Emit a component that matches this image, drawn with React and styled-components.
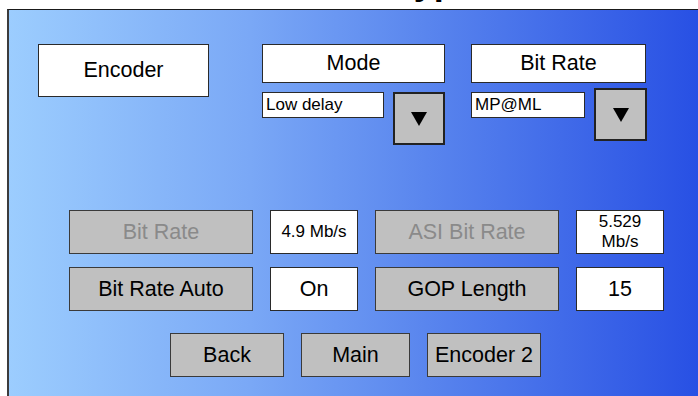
import styled, { createGlobalStyle } from 'styled-components';

const Global = createGlobalStyle`
  html, body {
    margin: 0;
    padding: 0;
    background: #ffffff;
    overflow: hidden;
  }
  * { box-sizing: border-box; }
  body {
    font-family: "Liberation Sans", Arial, sans-serif;
    color: #000;
  }
`;

const Page = styled.div`
  width: 698px;
  height: 396px;
  overflow: hidden;
  display: flex;
  flex-direction: column;
`;

const TitleStrip = styled.div`
  height: 9px;
  overflow: hidden;
  display: flex;
  justify-content: center;
  align-items: flex-end;
  padding-left: 18px;
`;

const Title = styled.h1`
  margin: 0 0 9px 0;
  font-size: 36px;
  line-height: 36px;
  font-weight: bold;
  white-space: nowrap;
`;

const Panel = styled.div`
  margin-left: 7px;
  flex: 1;
  border-top: 1px solid #1a1a1a;
  border-left: 2px solid #3c3c3c;
  background: linear-gradient(90deg, #9ccdfe 0%, #7aa8f6 35%, #5a86ee 60%, #2850e4 100%);
  padding-top: 34px;
  display: flex;
  flex-direction: column;
`;

const TopRow = styled.div`
  display: flex;
  align-items: flex-start;
  padding-left: 29px;
`;

const Label = styled.div`
  width: ${(p) => p.w}px;
  height: ${(p) => p.h}px;
  background: #ffffff;
  border: 1px solid #2a2a2a;
  display: flex;
  align-items: center;
  justify-content: center;
  font-size: 21.5px;
  text-align: center;
`;

const Group = styled.div`
  display: flex;
  flex-direction: column;
  gap: 9px;
  margin-left: ${(p) => p.gap}px;
`;

const PickRow = styled.div`
  display: flex;
  align-items: flex-start;
  gap: 9px;
`;

const Field = styled.div`
  width: ${(p) => p.w}px;
  height: 26px;
  background: #ffffff;
  border: 1px solid #2a2a2a;
  display: flex;
  align-items: center;
  padding-left: 3px;
  font-size: 17px;
`;

const DropButton = styled.button`
  width: ${(p) => p.w}px;
  height: 53px;
  margin-top: ${(p) => (p.raise ? -4 : 0)}px;
  background: #c0c0c0;
  border: 2px solid #222;
  padding: 0;
  display: flex;
  align-items: center;
  justify-content: center;
`;

const Grid = styled.div`
  margin-top: 65px;
  padding-left: 60px;
  display: grid;
  grid-template-columns: 184px 88px 184px 88px;
  grid-auto-rows: 44px;
  column-gap: 17px;
  row-gap: 13px;
`;

const GrayButton = styled.button`
  width: ${(p) => (p.w ? `${p.w}px` : 'auto')};
  height: 44px;
  background: #c0c0c0;
  border: 1px solid #3a3a3a;
  padding: 0;
  font-family: "Liberation Sans", Arial, sans-serif;
  font-size: 21.5px;
  color: ${(p) => (p.disabled ? '#8a8a8a' : '#000')};
`;

const Value = styled.div`
  background: #ffffff;
  border: 1px solid #2a2a2a;
  display: flex;
  align-items: center;
  justify-content: center;
  text-align: center;
  font-size: ${(p) => (p.small ? 17 : 21.5)}px;
  line-height: ${(p) => (p.small ? '20px' : 'normal')};
`;

const NavRow = styled.div`
  margin-top: 22px;
  padding-left: 161px;
  display: flex;
  gap: 17px;
`;

const Arrow = () => (
  <svg width="16" height="14" viewBox="0 0 16 14">
    <polygon points="0,0 16,0 8,14" fill="#000" />
  </svg>
);

export default function App() {
  return (
    <Page>
      <Global />
      <TitleStrip>
        <Title>Encoder Type</Title>
      </TitleStrip>
      <Panel>
        <TopRow>
          <Label w={171} h={53}>Encoder</Label>
          <Group gap={53}>
            <Label w={183} h={39}>Mode</Label>
            <PickRow>
              <Field w={122}>Low delay</Field>
              <DropButton w={52}><Arrow /></DropButton>
            </PickRow>
          </Group>
          <Group gap={26}>
            <Label w={175} h={39}>Bit Rate</Label>
            <PickRow>
              <Field w={114}>MP@ML</Field>
              <DropButton w={53} raise><Arrow /></DropButton>
            </PickRow>
          </Group>
        </TopRow>
        <Grid>
          <GrayButton disabled>Bit Rate</GrayButton>
          <Value small>4.9 Mb/s</Value>
          <GrayButton disabled>ASI Bit Rate</GrayButton>
          <Value small>5.529<br />Mb/s</Value>
          <GrayButton>Bit Rate Auto</GrayButton>
          <Value>On</Value>
          <GrayButton>GOP Length</GrayButton>
          <Value>15</Value>
        </Grid>
        <NavRow>
          <GrayButton w={114}>Back</GrayButton>
          <GrayButton w={109}>Main</GrayButton>
          <GrayButton w={114}>Encoder 2</GrayButton>
        </NavRow>
      </Panel>
    </Page>
  );
}
